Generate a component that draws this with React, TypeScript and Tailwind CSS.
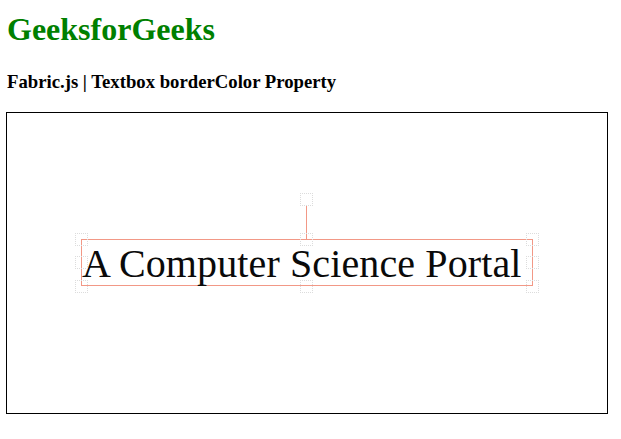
const handles = [
  // [left, top] centre points relative to the canvas inner box
  [74, 126],
  [74, 149],
  [74, 173],
  [299, 126],
  [299, 173],
  [299, 86],
  [525, 126],
  [525, 149],
  [525, 173],
];

const App = () => {
  return (
    <div className="min-h-screen bg-white px-[6px] font-['Liberation_Serif',serif] text-black">
      <h1 className="pl-px pt-[11px] text-[32px] font-bold leading-[37px] text-[#008000]">
        GeeksforGeeks
      </h1>
      <h3 className="mt-[23px] pl-px text-[18.72px] font-bold leading-[22px]">
        Fabric.js | Textbox borderColor Property
      </h3>
      <div className="relative mt-[19px] h-[302px] w-[602px] border border-black">
        {/* rotation line */}
        <div className="absolute left-[299px] top-[92px] h-[34px] w-px bg-[#f29886]" />
        {/* selected textbox */}
        <div className="absolute left-[74px] top-[126px] h-[47px] w-[452px] border border-[#f29886]">
          <div className="pt-[1px] text-[40px] leading-[46px] tracking-[0.12px] whitespace-nowrap text-[#0a0a0a]">
            A Computer Science Portal
          </div>
        </div>
        {handles.map(([x, y], i) => (
          <div
            key={i}
            className="absolute h-[13px] w-[13px] border border-dotted border-[#dcdcdc]"
            style={{ left: x - 6, top: y - 6 }}
          />
        ))}
      </div>
    </div>
  );
};

export default App;
